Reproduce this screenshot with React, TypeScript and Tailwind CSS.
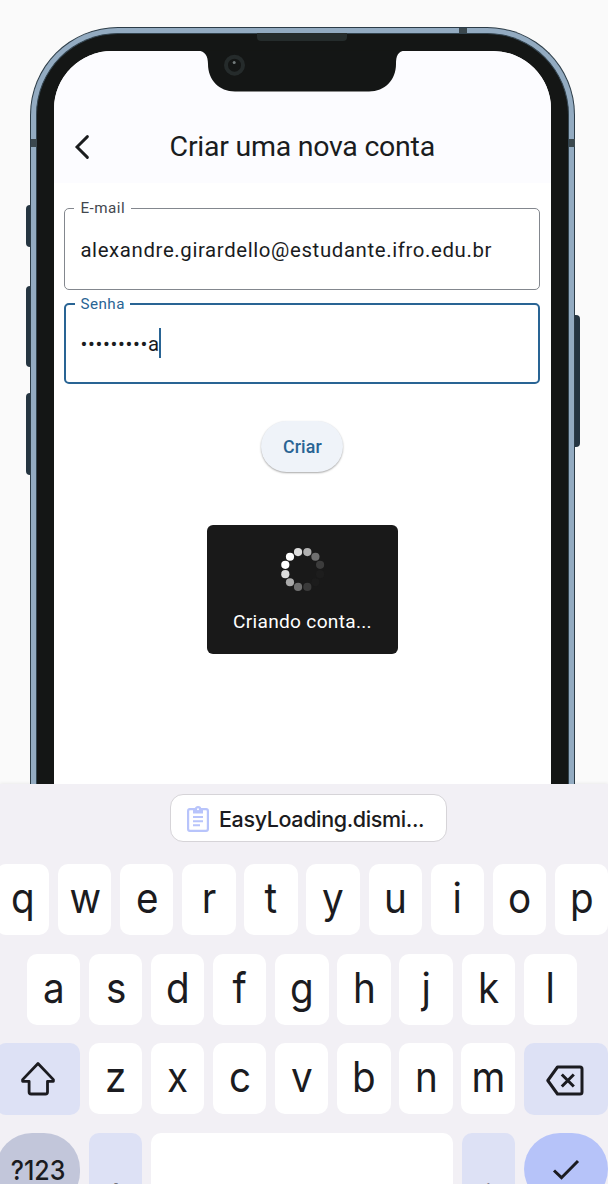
import type { ReactNode } from 'react';

const ROW_1 = ['q', 'w', 'e', 'r', 't', 'y', 'u', 'i', 'o', 'p'];
const ROW_2 = ['a', 's', 'd', 'f', 'g', 'h', 'j', 'k', 'l'];
const ROW_3 = ['z', 'x', 'c', 'v', 'b', 'n', 'm'];

const SPINNER = ['#b0b0b0', '#707070', '#3c3c3c', '#1d1d1d', '#1c1c1c', '#3a3a3a', '#707070', '#aaaaaa', '#dddddd', '#ffffff', '#ffffff', '#dddddd'];

function Letter({ children }: { children: ReactNode }) {
  return (
    <div className="flex h-[71px] w-[53.3px] shrink-0 items-center justify-center rounded-[10px] bg-white pb-1 text-[42px] leading-none">
      <span className="scale-x-[0.92]">{children}</span>
    </div>
  );
}

function Spinner() {
  return (
    <svg width="46" height="46" viewBox="-23 -23 46 46">
      {SPINNER.map((fill, i) => {
        const a = ((15 + i * 30) * Math.PI) / 180;
        return <circle key={i} cx={Math.sin(a) * 18 - 0.3} cy={-Math.cos(a) * 18 + 0.5} r="4.1" fill={fill} />;
      })}
    </svg>
  );
}

function Hardware() {
  return (
    <svg className="absolute left-0 top-0" width="608" height="784" viewBox="0 0 608 784" fill="none">
      <path d="M198 50.5C205 51 208 56 208 64C208 80 219 91.5 235 91.5H369C385 91.5 396 80 396 64C396 56 398 51 405 50.5Z" fill="#141615" />
      <path d="M257 33H347V37Q347 41 343 41H261Q257 41 257 37Z" fill="#252c2c" />
      <circle cx="234.5" cy="65.2" r="8.5" stroke="#252b2b" strokeWidth="4" />
      <circle cx="234.2" cy="62.5" r="1.5" fill="#737b7b" />
      <path d="M459 28H467V33H459ZM31 139H37V147H31ZM569 139H575V147H569Z" fill="#3b484e" />
    </svg>
  );
}

function LoginScreen() {
  return (
    <div className="h-[760px] rounded-t-[58px] bg-white">
      <header className="flex h-[132px] items-end rounded-t-[58px] bg-[#fcfcff] pb-5 pl-5">
        <svg width="18" height="32" viewBox="0 0 18 32" fill="none" stroke="#1a1c1e" strokeWidth="2.9" strokeLinecap="round">
          <path d="M13.4 5.6L3 16L13.4 26.4" />
        </svg>
        <h1 className="ml-[77.6px] whitespace-nowrap text-[28.5px] leading-8 tracking-[-0.25px] text-[#1a1c1e]">Criar uma nova conta</h1>
      </header>
      <form className="flex flex-col items-start pl-[10.4px] pt-4">
        <fieldset className="h-[91px] w-[476px] rounded-[5px] border-[1.5px] border-[#83878e] pl-[9px]">
          <legend className="pl-[6px] pr-[6px] text-[15.2px] leading-[18px] tracking-[0.5px] text-[#43474e]">E-mail</legend>
          <p className="pl-[6px] pt-[19px] text-[20.4px] leading-7 tracking-[0.62px] text-[#1a1c1e]">alexandre.girardello@estudante.ifro.edu.br</p>
        </fieldset>
        <fieldset className="mt-[5px] h-[89px] w-[476px] rounded-[5px] border-[2px] border-[#296494] pl-[9px]">
          <legend className="px-[5px] text-[15.2px] leading-[18px] tracking-[0.5px] text-[#296494]">Senha</legend>
          <div className="flex items-center pl-[5px] pt-4">
            <span className="text-[20.4px] leading-7 tracking-[0.62px] text-[#1a1c1e]">•••••••••a</span>
            <i className="-ml-px h-[30px] w-[2px] -translate-y-px bg-[#296494]" />
          </div>
        </fieldset>
        <button type="button" className="ml-[197px] mt-[37px] h-[51px] w-[82px] rounded-full bg-[#eff3f9] pt-0.5 text-[17.8px] font-medium tracking-[0.1px] text-[#296494] shadow-[0_1px_2px_rgba(0,0,0,0.35)]">Criar</button>
      </form>
      <div className="mx-auto mt-[53px] flex h-[129px] w-[191px] flex-col items-center rounded-[6px] bg-[#191919] pt-[21px]">
        <Spinner />
        <p className="mt-4 whitespace-nowrap text-[19.1px] leading-7 tracking-[0.3px] text-white">Criando conta...</p>
      </div>
    </div>
  );
}

function Phone() {
  return (
    <section className="relative flex h-[784px] items-start overflow-hidden">
      <div className="flex w-[30px] flex-col items-end gap-[26px] pt-[205px]">
        <i className="h-[42px] w-1 rounded-l-sm bg-[#253541]" />
        <i className="mt-[13px] h-[81px] w-1 rounded-l-sm bg-[#253541]" />
        <i className="h-[82px] w-1 rounded-l-sm bg-[#253541]" />
      </div>
      <div className="mt-[27px] w-[545px] rounded-t-[88px] border border-b-0 border-[#2c3c47] bg-[#93abc1] px-[5px] pt-[5px]">
        <div className="rounded-t-[82px] border border-b-0 border-[#33444f] bg-[#141615] pl-[17px] pr-[17px] pt-[17px]">
          <LoginScreen />
        </div>
      </div>
      <i className="mt-[315px] h-[132px] w-[4.5px] rounded-r-sm bg-[#253541]" />
      <Hardware />
    </section>
  );
}

function Keyboard() {
  return (
    <section className="h-[400px] overflow-hidden bg-[#f2f0f5] pt-2.5 font-['Inter',sans-serif] text-[#1b1b20] shadow-[0_-1px_3px_rgba(0,0,0,0.06)]">
      <div className="ml-[170px] flex h-12 w-[277px] items-center rounded-[13px] border-[1.5px] border-[#d6d4d8] bg-white pl-[15px] pt-px">
        <svg width="24" height="28" viewBox="0 0 24 28" fill="none" stroke="#b8c4fb" strokeWidth="2.2">
          <rect x="2.1" y="4.1" width="19.8" height="21.8" rx="1.8" />
          <path d="M7 4H17V8.5H7Z" fill="#b8c4fb" stroke="none" />
          <circle cx="12" cy="4.3" r="2.2" fill="white" strokeWidth="2.4" />
          <path d="M7 12H17M7 16.2H17M7 20.3H14" strokeWidth="2" />
        </svg>
        <span className="ml-[9px] whitespace-nowrap text-[21.5px] font-[450] leading-7 tracking-[-0.37px]">EasyLoading.dismi...</span>
      </div>
      <div className="-ml-[4px] mt-[22px] flex gap-[8.8px]">
        {ROW_1.map((k) => <Letter key={k}>{k}</Letter>)}
      </div>
      <div className="ml-[26.9px] mt-[19px] flex gap-[8.8px]">
        {ROW_2.map((k) => <Letter key={k}>{k}</Letter>)}
      </div>
      <div className="-ml-[3.9px] mt-[18.4px] flex gap-[8.8px]">
        <div className="flex h-[72px] w-[84px] shrink-0 items-center justify-center rounded-[10px] bg-[#dde1f5]">
          <svg width="38" height="38" viewBox="0 0 38 38" fill="none" stroke="#1b1b20" strokeWidth="2.8" strokeLinejoin="round">
            <path d="M19 3.5L34.4 19.6V21.3H28.5V32Q28.5 34 26.5 34H12.1Q10.1 34 10.1 32V21.3H3.6V19.6Z" />
          </svg>
        </div>
        {ROW_3.map((k) => <Letter key={k}>{k}</Letter>)}
        <div className="flex h-[72px] w-[84px] shrink-0 items-center justify-center rounded-[10px] bg-[#dde1f5] pt-1">
          <svg width="40" height="32" viewBox="0 0 40 32" fill="none" stroke="#1b1b20" strokeWidth="3" strokeLinejoin="round">
            <path d="M11.5 2H34Q36 2 36 4V27Q36 29 34 29H11.5L1.8 15.5Z" />
            <path d="M15.8 9.5L27.8 21.5M27.8 9.5L15.8 21.5" />
          </svg>
        </div>
      </div>
      <div className="-ml-[3.7px] mt-[17.6px] flex gap-[8.8px]">
        <div className="flex h-[75px] w-[84px] shrink-0 items-center justify-center rounded-[36px] bg-[#c2c6da] text-[27.5px] font-medium">
          <span className="scale-x-[0.91]">?123</span>
        </div>
        <div className="flex h-[71px] w-[53.3px] shrink-0 items-center justify-center rounded-[10px] bg-[#dde1f5] pt-[13px] text-[34px]">,</div>
        <div className="h-[71px] w-[301.8px] shrink-0 rounded-[10px] bg-white" />
        <div className="flex h-[71px] w-[53.3px] shrink-0 items-center justify-center rounded-[10px] bg-[#dde1f5] pt-[14px] text-[34px]">.</div>
        <div className="flex h-[72px] w-[84px] shrink-0 items-center justify-center rounded-full bg-[#b6c3f9] pt-0.5">
          <svg width="28" height="22" viewBox="0 0 28 22" fill="none" stroke="#1b1b20" strokeWidth="3">
            <path d="M2 11.5L9.5 18.7L26 2" />
          </svg>
        </div>
      </div>
    </section>
  );
}

export default function App() {
  return (
    <main className="h-[1184px] w-[608px] overflow-hidden bg-[#fafafa] font-['Roboto',sans-serif]">
      <Phone />
      <Keyboard />
    </main>
  );
}
